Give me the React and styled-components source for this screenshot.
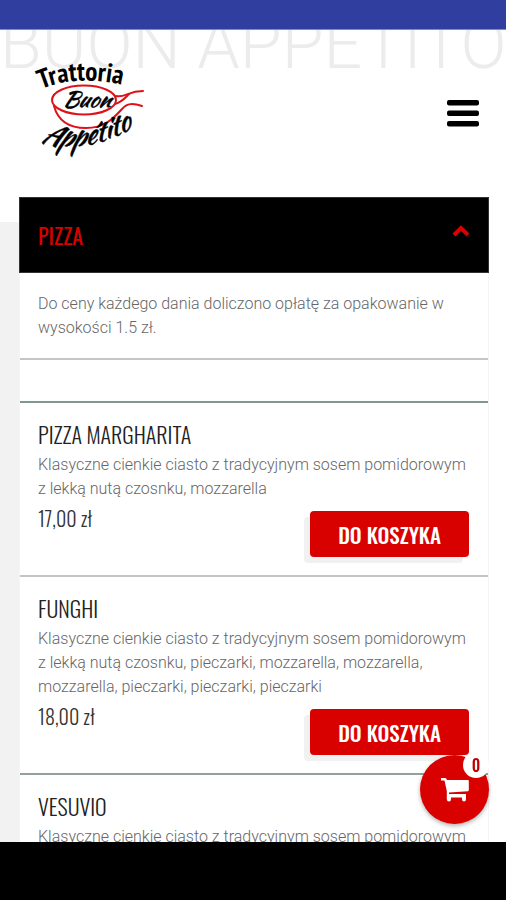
import React from "react";
import styled, { createGlobalStyle } from "styled-components";

const condensed = `Oswald, "Roboto Condensed", "Liberation Sans Narrow", "Noto Sans", sans-serif`;
const brush = `"Kaushan Script", "Caveat Brush", Caveat, "Liberation Serif", serif`;
const humanist = `"PT Sans Narrow", "Fira Sans Condensed", "Open Sans", sans-serif`;

const GlobalStyle = createGlobalStyle`
  * {
    box-sizing: border-box;
  }
  body {
    margin: 0;
    background: #fff;
    font-family: Roboto, "Liberation Sans", sans-serif;
  }
`;

const Screen = styled.div`
  display: flex;
  flex-direction: column;
  height: 100vh;
`;

const StatusBar = styled.div`
  flex: none;
  height: 30px;
  background: #303f9f;
  border-bottom: 1px solid #8288cc;
`;

const NavigationBar = styled.div`
  flex: none;
  height: 58px;
  background: #000;
`;

const Page = styled.div`
  flex: 1;
  min-height: 0;
  overflow-x: hidden;
  overflow-y: auto;
  scrollbar-width: none;
`;

const Header = styled.header`
  position: relative;
  display: flex;
  justify-content: space-between;
  align-items: center;
  height: 167px;
  padding: 0 27px 0 34px;
`;

const Watermark = styled.div`
  position: absolute;
  top: -19px;
  left: 0;
  width: 100%;
  white-space: nowrap;
  color: #ececec;
  font-size: 68px;
  font-weight: 300;
  line-height: 68px;
  text-align: center;
`;

const LogoLink = styled.a`
  position: relative;
  display: block;
  line-height: 0;

  svg {
    overflow: visible;
  }
`;

const MenuButton = styled.button`
  position: relative;
  display: flex;
  padding: 0;
  border: 0;
  background: none;
  cursor: pointer;
`;

const Menu = styled.main`
  padding: 0 17px 24px 19px;
  background: linear-gradient(#f2f2f2, #f2f2f2) no-repeat 0 25px / 50% 100%;
`;

const Category = styled.h2`
  margin: 0;
`;

const CategoryButton = styled.button`
  display: flex;
  justify-content: space-between;
  align-items: center;
  width: 100%;
  height: 76px;
  padding: 0 18px;
  border: 1px solid #333;
  background: #000;
  color: #d90000;
  font-family: ${condensed};
  font-size: 22px;
  font-weight: 400;
  cursor: pointer;

  svg {
    margin-bottom: 8px;
  }
`;

const Panel = styled.div`
  border: solid #f4f4f4;
  border-width: 0 1px;
  background: #fff;
`;

const Note = styled.p`
  margin: 0;
  padding: 19px 18px 18px;
  border-bottom: 2px solid #c3c6c3;
  color: #666;
  font-size: 16px;
  font-weight: 300;
  line-height: 24px;
`;

const Spacer = styled.div`
  height: 43px;
  border-bottom: 2px solid #7f998c;
`;

const Dish = styled.article`
  padding: 15px 19px 18px 18px;
  border-bottom: 2px solid ${(props) => props.$line};
`;

const DishName = styled.h3`
  margin: 0 0 3px;
  color: #222;
  font-family: ${condensed};
  font-size: 22px;
  font-weight: 300;
  line-height: 32px;
`;

const Description = styled.p`
  margin: 0;
  color: #666;
  font-size: 16px;
  font-weight: 300;
  line-height: 24px;
`;

const Order = styled.div`
  display: flex;
  justify-content: space-between;
  align-items: flex-start;
`;

const Price = styled.span`
  color: #333;
  font-family: ${condensed};
  font-size: 20px;
  font-weight: 300;
  line-height: 34px;
`;

const AddButton = styled.button`
  height: 46px;
  margin-top: 10px;
  padding: 0 28px;
  border: 0;
  border-radius: 4px;
  background: #d90000;
  box-shadow: -6px 6px 0 #f1f1f1;
  color: #fff;
  font-family: ${condensed};
  font-size: 21px;
  font-weight: 500;
  cursor: pointer;
`;

const CartButton = styled.button`
  position: fixed;
  right: 17px;
  bottom: 76px;
  display: flex;
  justify-content: center;
  align-items: center;
  width: 69px;
  height: 69px;
  padding: 0;
  border: 0;
  border-radius: 50%;
  background: #d90000;
  box-shadow: 0 2px 4px rgba(0, 0, 0, 0.3);
  cursor: pointer;
`;

const Badge = styled.span`
  position: absolute;
  top: -3px;
  right: 0;
  width: 26px;
  height: 26px;
  border-radius: 50%;
  background: #fff;
  color: #c00000;
  font-family: ${condensed};
  font-size: 16px;
  font-weight: 500;
  line-height: 26px;
  text-align: center;
`;

const dishes = [
  {
    name: "PIZZA MARGHARITA",
    description:
      "Klasyczne cienkie ciasto z tradycyjnym sosem pomidorowym z lekką nutą czosnku, mozzarella",
    price: "17,00 zł",
    line: "#c3c6c3",
  },
  {
    name: "FUNGHI",
    description:
      "Klasyczne cienkie ciasto z tradycyjnym sosem pomidorowym z lekką nutą czosnku, pieczarki, mozzarella, mozzarella, mozzarella, pieczarki, pieczarki, pieczarki",
    price: "18,00 zł",
    line: "#8fa398",
  },
  {
    name: "VESUVIO",
    description: "Klasyczne cienkie ciasto z tradycyjnym sosem pomidorowym",
    price: "19,00 zł",
    line: "#c3c6c3",
  },
];

function Logo() {
  return (
    <svg width="112" height="100" viewBox="0 0 112 100" role="img" aria-label="Trattoria Buon Appetito">
      <defs>
        <path id="arc-top" d="M7 25 Q48 8 104 25" />
        <path id="arc-bottom" d="M7 77 Q53 95 116 53" />
      </defs>
      <text fontFamily={humanist} fontSize="27" fontWeight="700" fill="#000">
        <textPath href="#arc-top">Trattoria</textPath>
      </text>
      <g fill="none" stroke="#e0101a" strokeWidth="2" strokeLinecap="round">
        <ellipse cx="50" cy="36" rx="32" ry="14.5" />
        <path d="M20 42 C24 57 36 64 52 64 C70 64 79 55 88 45 C93 39 99 39 108 42" />
        <path d="M82 32 C91 34 94 27 109 27" />
        <path d="M81 40 C88 38 91 34 95 30" />
      </g>
      <text x="28" y="43" fontFamily={brush} fontSize="22" fontStyle="italic" stroke="#000" strokeWidth="0.4" fill="#000">
        Buon
      </text>
      <text fontFamily={brush} fontSize="28" fontStyle="italic" stroke="#000" strokeWidth="0.4" fill="#000">
        <textPath href="#arc-bottom">Appétito</textPath>
      </text>
    </svg>
  );
}

function MenuIcon() {
  return (
    <svg width="32" height="28" viewBox="0 0 32 28" aria-hidden="true">
      <rect y="0" width="32" height="5.5" rx="2" />
      <rect y="10.500" width="32" height="5.5" rx="2" />
      <rect y="21" width="32" height="5.5" rx="2" />
    </svg>
  );
}

function ChevronUp() {
  return (
    <svg width="18" height="12" viewBox="0 0 18 12" aria-hidden="true">
      <path d="M2 10 L9 3 L16 10" fill="none" stroke="#d90000" strokeWidth="4" />
    </svg>
  );
}

function CartIcon() {
  return (
    <svg width="30" height="26" viewBox="0 0 30 26" fill="#fff" aria-hidden="true">
      <path d="M1 1 H5 Q6.500 1 7 3 H28 Q28.800 3 28.800 4 V13 Q28.800 14 28 14.200 L9 15.400 V17 H26 V22 Q26 24.500 24 24.500 Q22 24.500 22 22 V20.500 H11 V22 Q11 24.500 9 24.500 Q6.800 24.500 6.800 22 V14 L4.500 3.500 H1 Z" />
    </svg>
  );
}

export default function App() {
  return (
    <Screen>
      <GlobalStyle />
      <StatusBar />
      <Page>
        <Header>
          <Watermark>BUON APPETITO</Watermark>
          <LogoLink href="#">
            <Logo />
          </LogoLink>
          <MenuButton type="button" aria-label="Menu">
            <MenuIcon />
          </MenuButton>
        </Header>
        <Menu>
          <Category>
            <CategoryButton type="button" aria-expanded="true" aria-controls="pizza">
              PIZZA
              <ChevronUp />
            </CategoryButton>
          </Category>
          <Panel id="pizza">
            <Note>Do ceny każdego dania doliczono opłatę za opakowanie w wysokości 1.5 zł.</Note>
            <Spacer />
            {dishes.map((dish) => (
              <Dish key={dish.name} $line={dish.line}>
                <DishName>{dish.name}</DishName>
                <Description>{dish.description}</Description>
                <Order>
                  <Price>{dish.price}</Price>
                  <AddButton type="button">DO KOSZYKA</AddButton>
                </Order>
              </Dish>
            ))}
          </Panel>
        </Menu>
      </Page>
      <NavigationBar />
      <CartButton type="button" aria-label="Koszyk">
        <CartIcon />
        <Badge>0</Badge>
      </CartButton>
    </Screen>
  );
}
